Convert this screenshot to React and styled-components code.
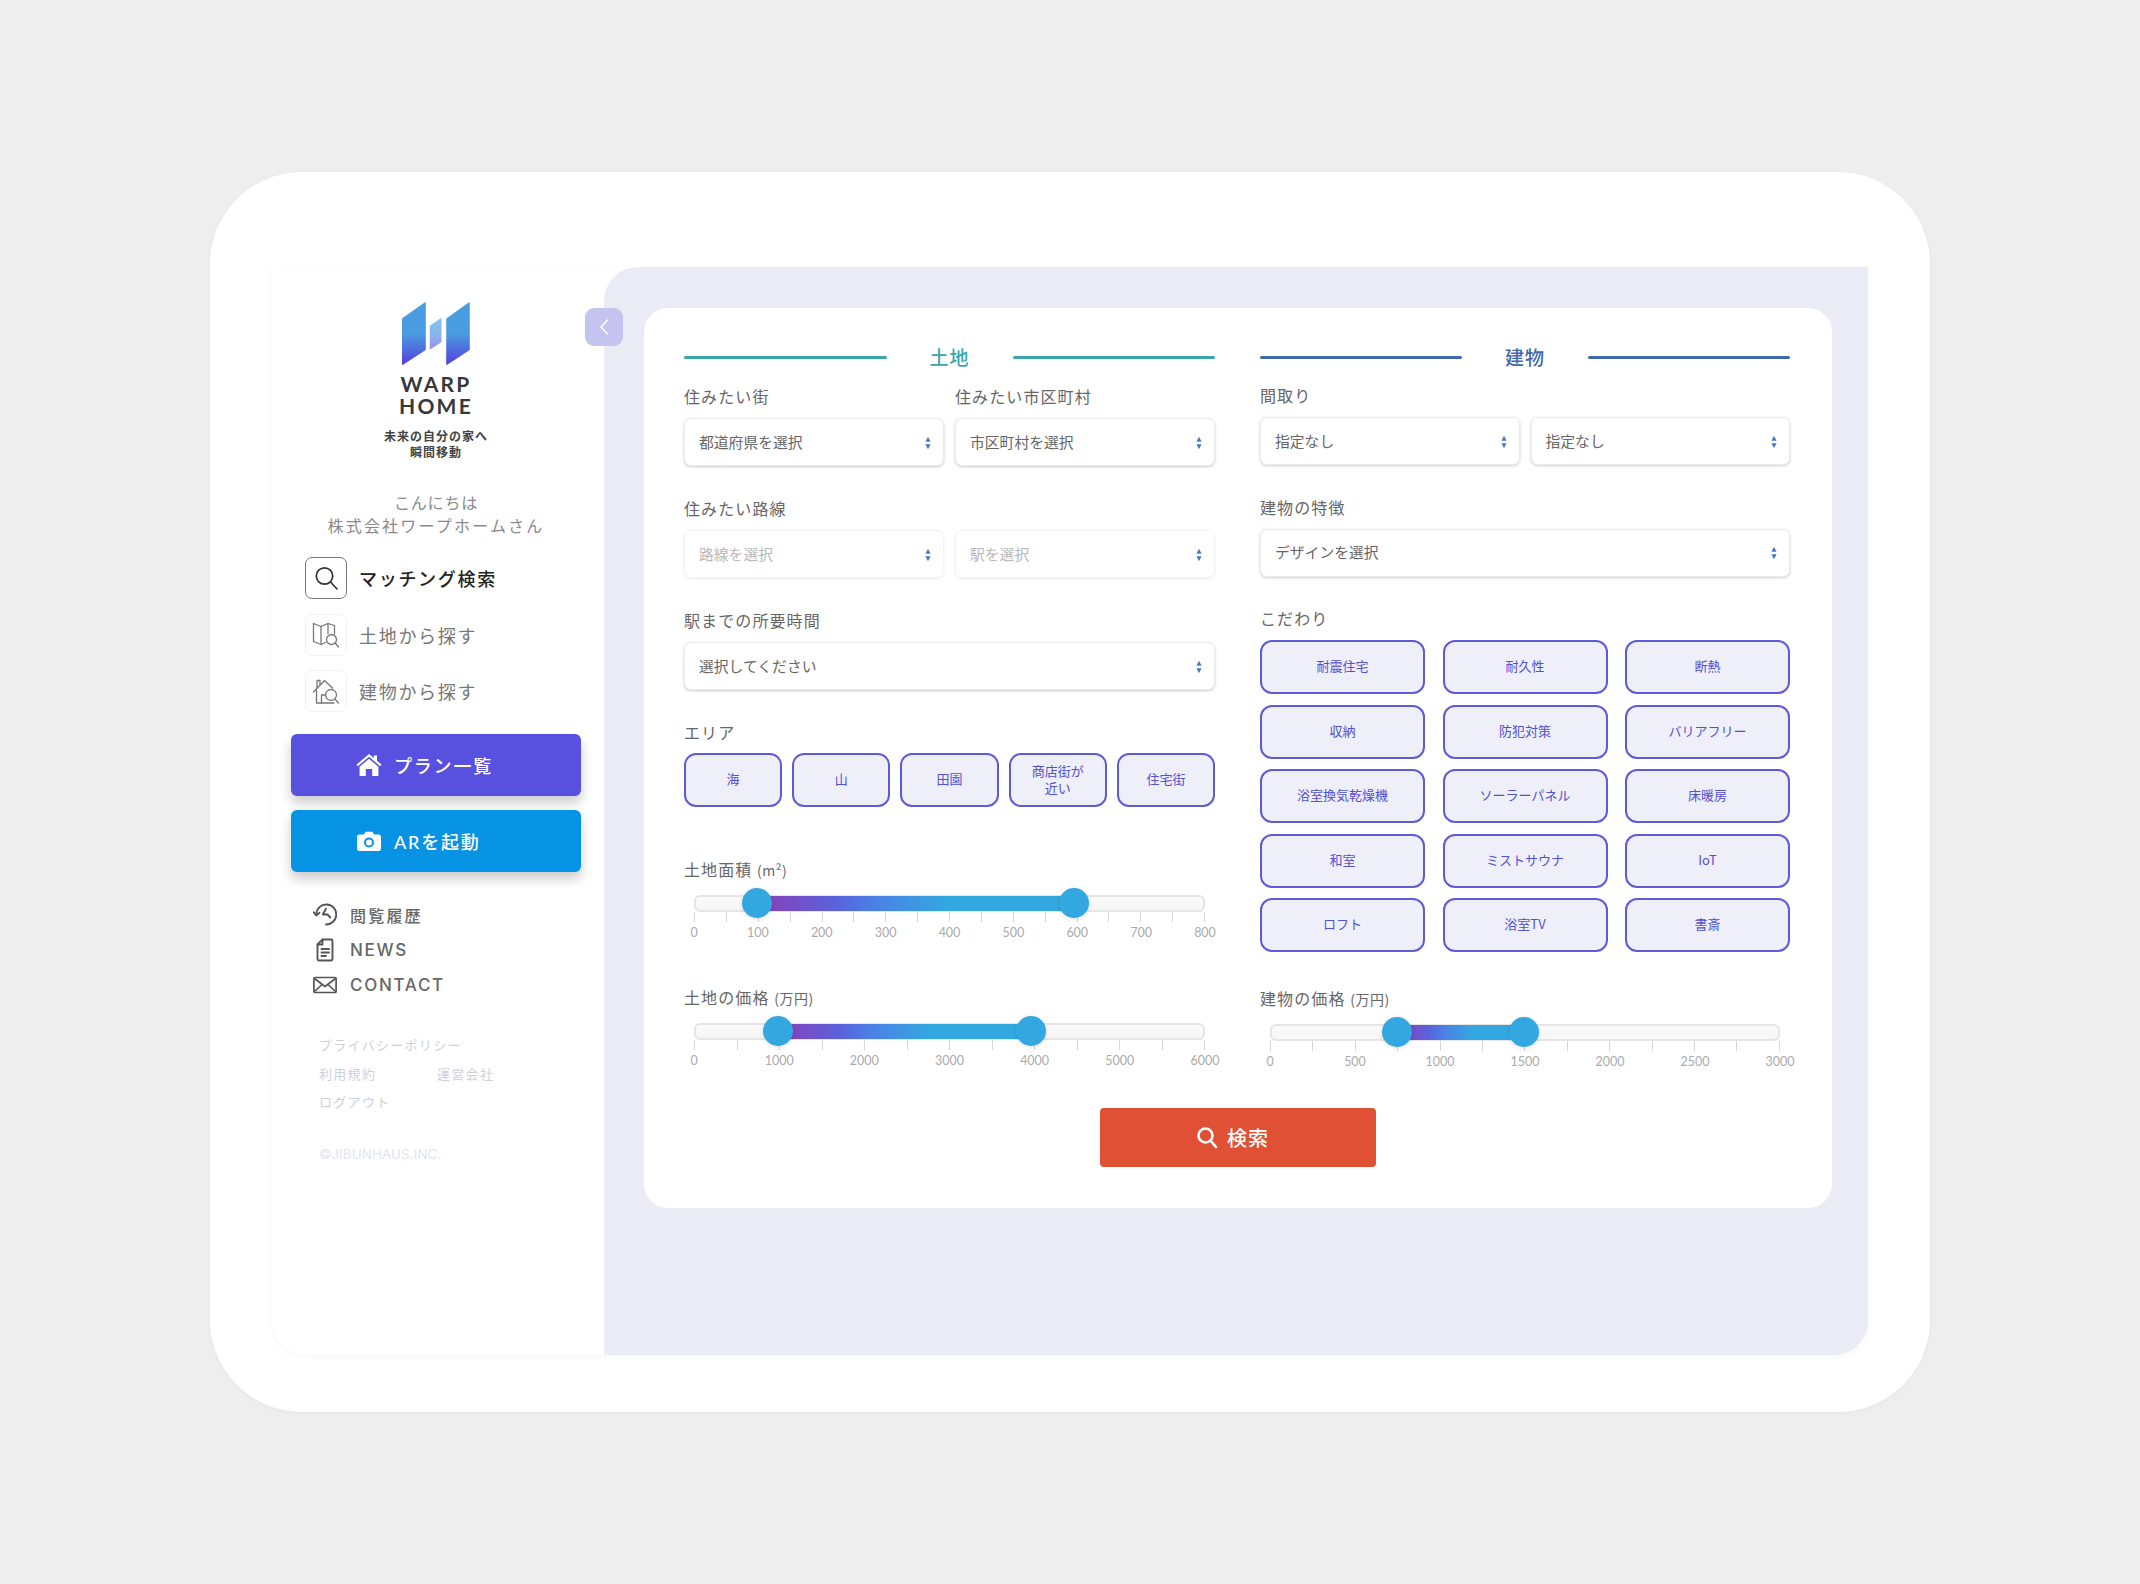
import React from "react";
import styled, { createGlobalStyle } from "styled-components";

const Global = createGlobalStyle`
  html, body { margin: 0; padding: 0; background: #eeeeee; }
  body { font-family: "Lato", "Noto Sans CJK JP", sans-serif; }
  * { box-sizing: border-box; }
`;

const Page = styled.div`
  width: 2140px; height: 1584px; display: flex; align-items: center; justify-content: center;
  background: #eeeeee;
`;
const Tablet = styled.div`
  width: 1720px; height: 1240px; padding: 95px 62px 57px; background: #fff; border-radius: 92px;
  box-shadow: 0 1px 4px rgba(0,0,0,.04);
`;
const Screen = styled.div`
  position: relative; display: flex; height: 100%; border-radius: 0 0 34px 34px;
  box-shadow: 0 2px 6px rgba(0,0,0,.035); 
`;
const Sidebar = styled.aside`
  width: 332px; flex: none; padding: 35px 23px 0 19px; display: flex; flex-direction: column;
`;
const Brand = styled.div`display: flex; flex-direction: column; align-items: center; color: #3a3a3f;`;
const LogoSvg = styled.svg`display: block; width: 68px; height: 63px; margin-bottom: 8px;`;
const Wordmark = styled.div`
  font: 700 21px/21.5px "Lato", sans-serif; letter-spacing: 2.2px; text-align: center; color: #38383c;
`;
const Tagline = styled.div`
  margin-top: 12px; font: 700 12px/16px "Noto Sans CJK JP", sans-serif; letter-spacing: 1px; text-align: center; color: #444;
`;
const Greeting = styled.div`
  margin-top: 31px; font: 400 16px/23px "Noto Sans CJK JP", sans-serif; letter-spacing: 2.2px; text-align: center; color: #8a8a8a;
`;
const GreetingHello = styled.div`letter-spacing: .8px;`;
const Nav = styled.nav`display: flex; flex-direction: column; gap: 14.5px; margin: 20px 0 0 14px;`;
const NavRow = styled.div`
  display: flex; align-items: center; gap: 12px; font: ${p => p.$active ? 500 : 400} 18px/42px "Noto Sans CJK JP", sans-serif;
  letter-spacing: 1.7px; color: ${p => p.$active ? "#222" : "#777"};
`;
const NavIcon = styled.span`
  width: 42px; height: 42px; border-radius: 7px; display: flex; align-items: center; justify-content: center;
  border: 1px solid ${p => p.$active ? "#777" : "#f1f1f1"};
`;
const CtaStack = styled.div`display: flex; flex-direction: column; gap: 14px; margin-top: 22px;`;
const Cta = styled.div`
  height: 62px; border-radius: 6px; background: ${p => p.$color}; color: #fff; display: flex; align-items: center; justify-content: flex-start; padding-left: 65px; gap: 12px;
  font: 500 18px "Lato", "Noto Sans CJK JP", sans-serif; letter-spacing: 1.8px; box-shadow: 0 7px 12px rgba(0,0,0,.2);
`;
const CtaIcon = styled.span`width: 26px; flex: none; display: flex; justify-content: center;`;
const SubNav = styled.div`display: flex; flex-direction: column; gap: 7px; margin: 29px 0 0 22px;`;
const SubRow = styled.div`
  display: flex; align-items: center; height: 28px; gap: 13px; color: #666;
  font: 500 ${p => p.$latin ? "17px" : "16px"} "Inter", "Noto Sans CJK JP", sans-serif; letter-spacing: ${p => p.$latin ? "1.7px" : "2.2px"};
`;
const SubIcon = styled.svg`width: 24px; height: 24px; flex: none; display: block;`;
const Legal = styled.div`
  display: grid; grid-template-columns: 118px auto; justify-content: start; row-gap: 8px; margin: 36px 0 0 28px;
  font: 400 13px/20.5px "Noto Sans CJK JP", sans-serif; letter-spacing: 1.3px; color: #cfcfdc;
`;
const LegalWide = styled.span`grid-column: 1 / -1;`;
const Copy = styled.div`
  margin: 31px 0 0 28px; font: 400 13.4px/20px "Inter", sans-serif; letter-spacing: .1px; color: #e4e4ee;
`;
const Collapse = styled.div`
  position: absolute; left: 313px; top: 41px; width: 38px; height: 38px; border-radius: 9px; background: #c5c4f0; z-index: 2;
  display: flex; align-items: center; justify-content: center;
`;
const Main = styled.main`
  flex: 1; background: #ebebf6; border-radius: 34px 0 34px 0; padding: 41px 36px 0 40px;
`;
const Card = styled.section`background: #fff; border-radius: 24px; padding: 37px 42px 41px 40px; height: 900px;`;
const Columns = styled.div`display: grid; grid-template-columns: 531px 530px; column-gap: 45px;`;
const Col = styled.div`display: flex; flex-direction: column;`;
const Heading = styled.h2`
  margin: 0 0 ${p => p.$gap}px; height: 24px; display: flex; align-items: center; justify-content: center; gap: 43px;
  font: 500 19px/24px "Noto Sans CJK JP", sans-serif; letter-spacing: 1px; color: ${p => p.$color};
  &::before, &::after { content: ""; flex: 1; height: 3px; background: ${p => p.$color}; border-radius: 2px; }
`;
const Field = styled.div`margin-bottom: ${p => p.$mb ?? 31}px;`;
const Label = styled.div`
  height: 22px; margin-bottom: ${p => p.$mb ?? 11}px; font: 400 16px/22px "Noto Sans CJK JP", sans-serif; letter-spacing: 1.1px; color: #666;
`;
const Unit = styled.span`font-size: 14px; letter-spacing: .5px;`;
const Pair = styled.div`display: grid; grid-template-columns: 1fr 1fr; gap: 11px;`;
const Select = styled.div`
  height: 48px; border-radius: 7px; background: #fff; padding: 0 12px 2px 14px; display: flex; align-items: center; justify-content: space-between;
  font: 400 14.8px "Noto Sans CJK JP", sans-serif;
  color: ${p => p.$disabled ? "#b8b8b8" : "#666"};
  border: 1px solid ${p => p.$disabled ? "#f4f4f4" : "#ececec"};
  box-shadow: 0 1px 3px rgba(0,0,0,${p => p.$disabled ? .07 : .2});
`;
const Arrows = styled.svg`width: 6px; height: 14px; flex: none; display: block; margin-top: 3px;`;
const AreaRow = styled.div`display: grid; grid-template-columns: repeat(5, 1fr); gap: 10px;`;
const Chip = styled.div`
  height: 54px; border-radius: 12px; background: #eeeff8; border: 2px solid #5f5bd4; display: flex; align-items: center; justify-content: center;
  text-align: center; padding-bottom: 3px; font: 400 13px/17px "Noto Sans CJK JP", sans-serif; color: #5350d2;
`;
const ChipGrid = styled.div`display: grid; grid-template-columns: repeat(3, 165px); justify-content: space-between; row-gap: 10.5px;`;
const SliderBox = styled.div`margin: 0 10px; padding-top: 7px; height: ${p => p.$h ?? 78}px;`;
const Track = styled.div`
  position: relative; height: 17px; border-radius: 6px; background: linear-gradient(#fafafa, #f6f6f6); border: 2px solid #e5e5e5;
`;
const Fill = styled.div`
  position: absolute; top: -1px; bottom: -1px; background: linear-gradient(90deg, #8a3fb8 0%, #5a62dc 25%, #4a82e6 38%, #33a8e0 60%, #33a8e0 100%);
`;
const Thumb = styled.div`
  position: absolute; top: 50%; width: 30px; height: 30px; margin: -15px 0 0 -15px; border-radius: 50%; background: #33a8e0; box-shadow: 0 1px 4px rgba(0,0,0,.14);
`;
const Ticks = styled.div`display: flex; justify-content: space-between; height: 10px;`;
const Tick = styled.i`display: block; width: 1px; height: 100%; background: #d6d6d6;`;
const Scale = styled.div`display: flex; justify-content: space-between; margin-top: 2px;`;
const ScaleNum = styled.span`
  width: 0; display: flex; justify-content: center; font: 400 12.5px/18px "Lato", sans-serif; color: #aaa; white-space: nowrap;
`;
const SearchRow = styled.div`display: flex; justify-content: center; margin: 15px 0 0 2px;`;
const SearchBtn = styled.div`
  width: 276px; height: 59px; border-radius: 4px; background: #e05035; color: #fff; display: flex; align-items: center; justify-content: center; gap: 8px;
  font: 500 20px "Noto Sans CJK JP", sans-serif; letter-spacing: 1px; padding-right: 12px;
`;

const Updown = () => (
  <Arrows viewBox="0 0 6 14"><path d="M3 .8 5.6 5.8H.4Z" fill="#4a78c8" /><path d="M3 13.2 5.6 8.2H.4Z" fill="#4a78c8" /></Arrows>
);
const Sel = ({ children, disabled }) => <Select $disabled={disabled}><span>{children}</span><Updown /></Select>;

const Slider = ({ from, to, max, major, minor, h }) => {
  const ticks = Math.round(max / minor) + 1;
  const nums = Math.round(max / major) + 1;
  return (
    <SliderBox $h={h}>
      <Track>
        <Fill style={{ left: `${from}%`, width: `${to - from}%` }} />
        <Thumb style={{ left: `${from}%` }} />
        <Thumb style={{ left: `${to}%` }} />
      </Track>
      <Ticks>{Array.from({ length: ticks }, (_, i) => <Tick key={i} />)}</Ticks>
      <Scale>{Array.from({ length: nums }, (_, i) => <ScaleNum key={i}>{i * major}</ScaleNum>)}</Scale>
    </SliderBox>
  );
};

const Logo = () => (
  <LogoSvg viewBox="0 0 68 63">
    <defs>
      <linearGradient id="lg" x1="0" y1="0" x2="0" y2="1">
        <stop offset="0" stopColor="#4a9fe0" /><stop offset=".5" stopColor="#4a9be0" /><stop offset="1" stopColor="#5340dc" />
      </linearGradient>
      <linearGradient id="lg2" x1="0" y1="0" x2="0" y2="1">
        <stop offset="0" stopColor="#86c0ec" /><stop offset=".5" stopColor="#86b8ea" /><stop offset="1" stopColor="#9a90e8" />
      </linearGradient>
    </defs>
    <path d="M0.5 16 23 .3q.8-.3.8.6V47q0 1-.8 1.4L1 62.8q-1 .4-1-.8V17q0-.7.5-1Z" fill="url(#lg)" />
    <path d="M28.2 23.5 38.7 16.2q.8-.3.8.5V39.5q0 .7-.6 1L28.6 47.2q-.9.3-.9-.6V24.4q0-.6.5-.9Z" fill="url(#lg2)" />
    <path d="M45 16 67 .3q.8-.3.8.6V47q0 1-.8 1.4L45.2 62.8q-1 .4-1-.8V17q0-.7.8-1Z" fill="url(#lg)" />
  </LogoSvg>
);

const SearchGlyph = () => (
  <svg width="26" height="26" viewBox="0 0 26 26" fill="none" stroke="#333" strokeWidth="1.7" strokeLinecap="round">
    <circle cx="11.5" cy="11" r="8.2" /><path d="M17.5 17 24 24" />
  </svg>
);
const MapGlyph = () => (
  <svg width="28" height="28" viewBox="0 0 28 28" fill="none" stroke="#777" strokeWidth="1.3" strokeLinejoin="round" strokeLinecap="round">
    <path d="M1.5 2.500 9 5.500 16 2.500 22.500 4.500V13" /><path d="M1.500 2.500V20.500L9 23.500 13.500 21.500" /><path d="M9 5.500V23.500M16 2.500V12.500" />
    <circle cx="19.500" cy="18.500" r="5" /><path d="M23.200 22 26.500 26" />
  </svg>
);
const HouseGlyph = () => (
  <svg width="28" height="28" viewBox="0 0 28 28" fill="none" stroke="#777" strokeWidth="1.3" strokeLinejoin="round" strokeLinecap="round">
    <path d="M1.500 15 12.500 3.500 20.500 11" /><path d="M5 11V3.500H8V8" /><path d="M4.500 13V26H9.500V18H13.500" /><path d="M9.500 26H22" />
    <circle cx="19" cy="18" r="5.500" /><path d="M22.800 22 26.500 26" />
  </svg>
);
const HomeSolid = () => (
  <svg width="26" height="24" viewBox="0 0 26 24" fill="#fff">
    <path d="M13 1 .6 11.600l1.300 1.600L13 3.700l11.100 9.500 1.300-1.600-4.400-3.800V2.400h-3.200v2.700Z" />
    <path d="M13 5.800 3.600 13.800V23h6.200v-7h6.400v7h6.200v-9.200Z" />
  </svg>
);
const CameraSolid = () => (
  <svg width="24" height="20" viewBox="0 0 24 20">
    <path d="M2.500 3.500H7L8.500.8h7L17 3.500h4.500A2.500 2.500 0 0 1 24 6v11.500a2.500 2.500 0 0 1-2.500 2.500h-19A2.500 2.500 0 0 1 0 17.500V6a2.500 2.500 0 0 1 2.500-2.500Z" fill="#fff" />
    <circle cx="12" cy="11.500" r="5" fill="#0693e3" /><circle cx="12" cy="11.500" r="3" fill="#fff" />
  </svg>
);
const Chevron = () => (
  <svg width="12" height="18" viewBox="0 0 12 18" fill="none" stroke="#fff" strokeWidth="1.600" strokeLinecap="round" strokeLinejoin="round"><path d="M9.500 2 3 9l6.500 7" /></svg>
);
const HistoryIcon = () => (
  <SubIcon viewBox="0 0 24 24" fill="none" stroke="#555" strokeWidth="1.900" strokeLinecap="round" strokeLinejoin="round">
    <path d="M3.300 11A10 10 0 1 1 13 21.500" /><path d="M.6 9.200 3.300 12.500 6.400 9.800" /><path d="M13 5.800 9.800 11.500H14.500L17.300 14.500" />
  </SubIcon>
);
const NewsIcon = () => (
  <SubIcon viewBox="0 0 24 24" fill="none" stroke="#555" strokeWidth="1.900" strokeLinejoin="round" strokeLinecap="round">
    <path d="M9.500 1.500H18A1.500 1.500 0 0 1 19.500 3V21A1.500 1.500 0 0 1 18 22.500H6A1.500 1.500 0 0 1 4.500 21V6.500Z" /><path d="M9.500 1.500V6.500H4.500M8.500 11H16M8.500 14.500H16M8.500 18H13" />
  </SubIcon>
);
const MailIcon = () => (
  <SubIcon viewBox="0 0 24 24" fill="none" stroke="#555" strokeWidth="1.700" strokeLinejoin="round">
    <rect x=".9" y="4.500" width="22.200" height="15" rx="1" /><path d="M1.500 5.500 12 13.500l10.500-8M1.500 18.500 9 11.500M22.500 18.500 15 11.500" />
  </SubIcon>
);
const SearchWhite = () => (
  <svg width="24" height="24" viewBox="0 0 24 24" fill="none" stroke="#fff" strokeWidth="2.600" strokeLinecap="round"><circle cx="10.500" cy="10.500" r="7" /><path d="M15.800 16 21 22" /></svg>
);

const chips = ["耐震住宅", "耐久性", "断熱", "収納", "防犯対策", "バリアフリー", "浴室換気乾燥機", "ソーラーパネル", "床暖房", "和室", "ミストサウナ", "IoT", "ロフト", "浴室TV", "書斎"];

export default function App() {
  return (
    <Page>
      <Global />
      <Tablet>
        <Screen>
          <Sidebar>
            <Brand>
              <Logo />
              <Wordmark>WARP<br />HOME</Wordmark>
              <Tagline>未来の自分の家へ<br />瞬間移動</Tagline>
            </Brand>
            <Greeting><GreetingHello>こんにちは</GreetingHello>株式会社ワープホームさん</Greeting>
            <Nav>
              <NavRow $active><NavIcon $active><SearchGlyph /></NavIcon>マッチング検索</NavRow>
              <NavRow><NavIcon><MapGlyph /></NavIcon>土地から探す</NavRow>
              <NavRow><NavIcon><HouseGlyph /></NavIcon>建物から探す</NavRow>
            </Nav>
            <CtaStack>
              <Cta $color="#5850de"><CtaIcon><HomeSolid /></CtaIcon>プラン一覧</Cta>
              <Cta $color="#0693e3"><CtaIcon><CameraSolid /></CtaIcon>ARを起動</Cta>
            </CtaStack>
            <SubNav>
              <SubRow><HistoryIcon />閲覧履歴</SubRow>
              <SubRow $latin><NewsIcon />NEWS</SubRow>
              <SubRow $latin><MailIcon />CONTACT</SubRow>
            </SubNav>
            <Legal>
              <LegalWide>プライバシーポリシー</LegalWide>
              <span>利用規約</span><span>運営会社</span>
              <LegalWide>ログアウト</LegalWide>
            </Legal>
            <Copy>©JIBUNHAUS.INC.</Copy>
          </Sidebar>
          <Collapse><Chevron /></Collapse>
          <Main>
            <Card>
              <Columns>
                <Col>
                  <Heading $color="#3ba5ac" $gap={16}>土地</Heading>
                  <Field>
                    <Pair>
                      <div><Label>住みたい街</Label><Sel>都道府県を選択</Sel></div>
                      <div><Label>住みたい市区町村</Label><Sel>市区町村を選択</Sel></div>
                    </Pair>
                  </Field>
                  <Field>
                    <Label>住みたい路線</Label>
                    <Pair><Sel disabled>路線を選択</Sel><Sel disabled>駅を選択</Sel></Pair>
                  </Field>
                  <Field><Label>駅までの所要時間</Label><Sel>選択してください</Sel></Field>
                  <Field $mb={51}>
                    <Label $mb={10}>エリア</Label>
                    <AreaRow>
                      <Chip>海</Chip><Chip>山</Chip><Chip>田園</Chip><Chip>商店街が<br />近い</Chip><Chip>住宅街</Chip>
                    </AreaRow>
                  </Field>
                  <Label $mb={7.5}>土地面積 <Unit>(m²)</Unit></Label>
                  <Slider from={12.1} to={74.6} max={800} major={100} minor={50} h={98.5} />
                  <Label $mb={7.5}>土地の価格 <Unit>(万円)</Unit></Label>
                  <Slider from={16.2} to={66.100} max={6000} major={1000} minor={500} h={76} />
                </Col>
                <Col>
                  <Heading $color="#4169ad" $gap={15}>建物</Heading>
                  <Field $mb={30.5}>
                    <Label>間取り</Label>
                    <Pair><Sel>指定なし</Sel><Sel>指定なし</Sel></Pair>
                  </Field>
                  <Field $mb={30.5}><Label>建物の特徴</Label><Sel>デザインを選択</Sel></Field>
                  <Field $mb={35}>
                    <Label>こだわり</Label>
                    <ChipGrid>{chips.map(c => <Chip key={c}>{c}</Chip>)}</ChipGrid>
                  </Field>
                  <Label $mb={7.5}>建物の価格 <Unit>(万円)</Unit></Label>
                  <Slider from={24.7} to={49.800} max={3000} major={500} minor={250} h={76} />
                </Col>
              </Columns>
              <SearchRow><SearchBtn><SearchWhite />検索</SearchBtn></SearchRow>
            </Card>
          </Main>
        </Screen>
      </Tablet>
    </Page>
  );
}
